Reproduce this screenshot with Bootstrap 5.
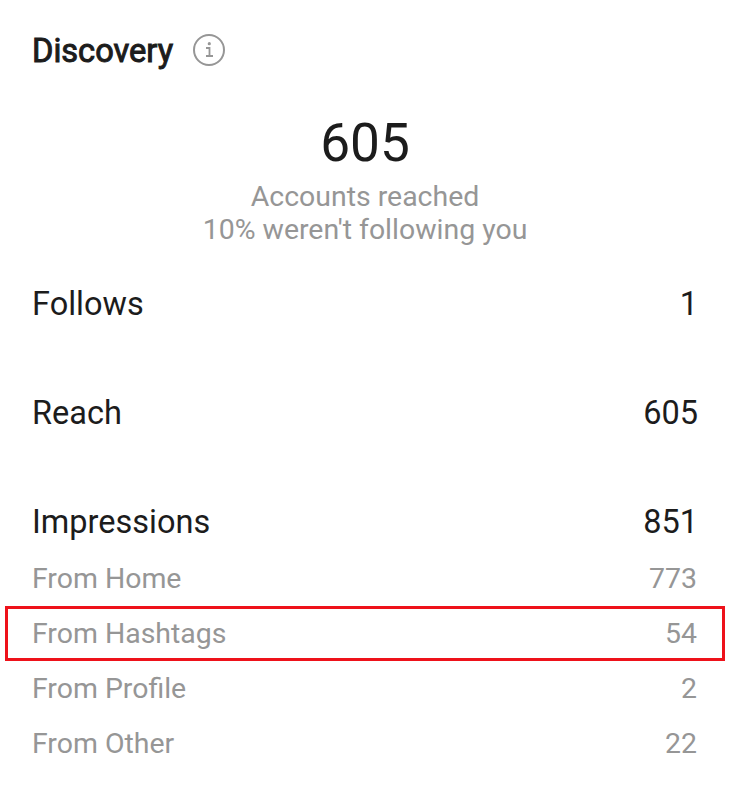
<!DOCTYPE html>
<html lang="en">
<head>
<meta charset="utf-8">
<meta name="viewport" content="width=device-width, initial-scale=1">
<title>Discovery</title>
<link href="https://cdn.jsdelivr.net/npm/bootstrap@5.3.0/dist/css/bootstrap.min.css" rel="stylesheet">
<style>
body { font-family: Roboto, "Liberation Sans", sans-serif; color: #1c1c1c; background: #fff; }
.insights { width: 730px; height: 800px; padding: 27px 32px 0; overflow: hidden; }
.heading { font-size: 32.6px; line-height: 44px; padding-top: 2px; font-weight: 400; -webkit-text-stroke: 1px #1c1c1c; }
.info-icon { width: 34px; height: 34px; margin-left: 3px; }
.total { font-size: 53.2px; line-height: 64px; margin-top: 38px; }
.caption { font-size: 28.45px; line-height: 33px; color: #969696; margin-top: 5px; }
.metric { font-size: 32.5px; height: 109px; line-height: 40px; }
.metrics { margin-top: 38px; }
.metric-last { height: 49px; }
.source { font-size: 28.45px; height: 55px; color: #969696; margin: 0 -27px; padding: 2px 28px 0 27px; }
.source-marked { outline: 3px solid #ee121a; outline-offset: -3px; }
</style>
</head>
<body>
<main class="insights">
  <header class="d-flex align-items-center">
    <h1 class="heading mb-0 me-3">Discovery</h1>
    <svg class="info-icon" viewBox="0 0 34 34" fill="none" stroke="#969696" stroke-width="2"><circle cx="17" cy="17" r="15"/><path d="M14 15h3.5v8M14 23h7" stroke-width="1.8"/><circle cx="17.3" cy="10.7" r="1.6" fill="#969696" stroke="none"/></svg>
  </header>
  <section class="text-center">
    <div class="total">605</div>
    <div class="caption">Accounts reached<br>10% weren't following you</div>
  </section>
  <section class="metrics">
    <div class="metric d-flex justify-content-between"><span>Follows</span><span>1</span></div>
    <div class="metric d-flex justify-content-between"><span>Reach</span><span>605</span></div>
    <div class="metric metric-last d-flex justify-content-between"><span>Impressions</span><span>851</span></div>
    <div class="source d-flex justify-content-between align-items-center"><span>From Home</span><span>773</span></div>
    <div class="source source-marked d-flex justify-content-between align-items-center"><span>From Hashtags</span><span>54</span></div>
    <div class="source d-flex justify-content-between align-items-center"><span>From Profile</span><span>2</span></div>
    <div class="source d-flex justify-content-between align-items-center"><span>From Other</span><span>22</span></div>
  </section>
</main>
<script src="https://cdn.jsdelivr.net/npm/bootstrap@5.3.0/dist/js/bootstrap.bundle.min.js"></script>
</body>
</html>
